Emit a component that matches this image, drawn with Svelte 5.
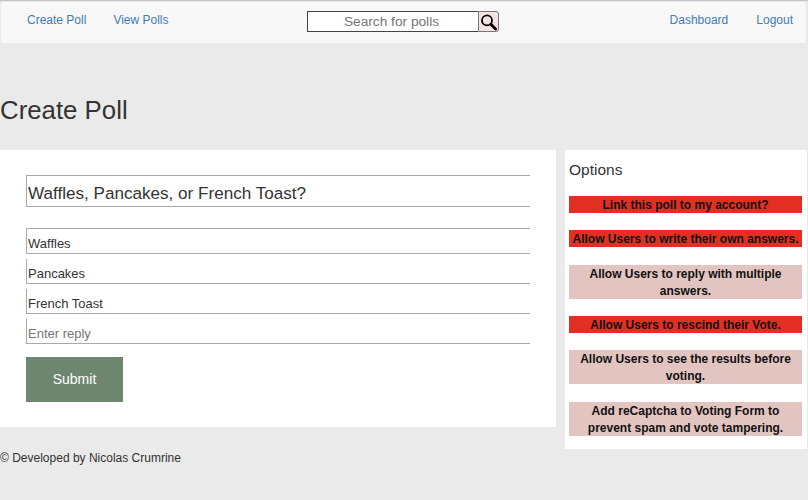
<script>
	let answers = ['Waffles', 'Pancakes', 'French Toast'];

	let options = [
		{ label: 'Link this poll to my account?', on: true },
		{ label: 'Allow Users to write their own answers.', on: true },
		{ label: 'Allow Users to reply with multiple answers.', on: false },
		{ label: 'Allow Users to rescind their Vote.', on: true },
		{ label: 'Allow Users to see the results before voting.', on: false },
		{ label: 'Add reCaptcha to Voting Form to prevent spam and vote tampering.', on: false }
	];
</script>

<div class="page">
	<nav class="navbar">
		<div class="nav-links">
			<a href="#create">Create Poll</a>
			<a href="#view">View Polls</a>
		</div>
		<form class="search">
			<input type="text" placeholder="Search for polls" />
			<button type="button" aria-label="Search">
				<svg width="18" height="18" viewBox="0 0 18 18">
					<circle cx="7" cy="7.4" r="5" fill="none" stroke="#000" stroke-width="1.8" />
					<path d="M10.8 11.2 L15.6 16" stroke="#000" stroke-width="2.8" stroke-linecap="round" />
				</svg>
			</button>
		</form>
		<div class="nav-links right">
			<a href="#dashboard">Dashboard</a>
			<a href="#logout">Logout</a>
		</div>
	</nav>

	<h1>Create Poll</h1>

	<div class="content">
		<div class="main">
			<form class="card">
				<input class="question" type="text" value="Waffles, Pancakes, or French Toast?" />
				<div class="answers">
					{#each answers as answer}
						<input class="answer" type="text" value={answer} />
					{/each}
					<input class="answer" type="text" placeholder="Enter reply" />
				</div>
				<button class="submit" type="button">Submit</button>
			</form>
			<footer>© Developed by Nicolas Crumrine</footer>
		</div>

		<aside class="sidebar">
			<h2>Options</h2>
			{#each options as option}
				<div class="option" class:on={option.on}><span>{option.label}</span></div>
			{/each}
		</aside>
	</div>
</div>

<style>
	:global(body) {
		background: #eaeaea;
		font-family: 'Liberation Sans', Arial, sans-serif;
		color: #333;
	}

	.page {
		height: 500px;
		overflow: hidden;
		border-top: 1px solid #c4c4c4;
	}

	.navbar {
		display: flex;
		align-items: flex-start;
		justify-content: space-between;
		height: 41px;
		margin: 1px 2px 0 1px;
		background: #f8f8f8;
		border-radius: 3px;
		box-sizing: border-box;
		position: relative;
	}

	.nav-links {
		display: flex;
		gap: 27px;
		padding: 11px 0 0 26px;
		font-size: 12px;
		line-height: 14px;
	}

	.nav-links.right {
		gap: 28px;
		padding: 11px 13px 0 0;
	}

	.nav-links a {
		color: #3f7cb4;
		text-decoration: none;
	}

	.search {
		display: flex;
		margin: 9px 0 0 0;
		position: absolute;
		left: 306px;
	}

	.search input {
		width: 171px;
		height: 21px;
		box-sizing: border-box;
		border: 1px solid #444;
		border-width: 1px 0 1px 1px;
		padding: 0 3px 0 0;
		text-align: center;
		font: 13.7px 'Liberation Sans', Arial, sans-serif;
		background: #fff;
	}

	.search input::placeholder {
		color: #757575;
		opacity: 1;
	}

	.search button {
		display: flex;
		align-items: center;
		justify-content: center;
		width: 21px;
		height: 21px;
		padding: 0;
		box-sizing: border-box;
		background: #f6e3e1;
		border: 1px solid #777;
		border-radius: 0 3px 3px 0;
	}

	h1 {
		margin: 0;
		padding-top: 52px;
		height: 55px;
		font-size: 25.8px;
		line-height: 30px;
		font-weight: 400;
		color: #333;
	}

	.content {
		display: flex;
		align-items: flex-start;
		gap: 9px;
	}

	.main {
		width: 556px;
	}

	.card {
		display: flex;
		flex-direction: column;
		align-items: flex-start;
		height: 277px;
		box-sizing: border-box;
		padding: 25px 26px 0;
		background: #fff;
	}

	input {
		outline: none;
	}

	.question {
		width: 504px;
		height: 32px;
		box-sizing: border-box;
		padding: 6px 1px 0;
		border: 1px solid #a9a9a9;
		border-right: 0;
		font: 17.1px 'Liberation Sans', Arial, sans-serif;
		color: #333;
	}

	.answers {
		display: flex;
		flex-direction: column;
		gap: 5px;
		margin-top: 21px;
	}

	.answer {
		width: 504px;
		height: 25px;
		box-sizing: border-box;
		padding: 5px 1px 0;
		border: 0;
		border-left: 1px solid #a9a9a9;
		border-bottom: 1px solid #a9a9a9;
		font: 13px 'Liberation Sans', Arial, sans-serif;
		color: #333;
	}

	.answer:first-child {
		height: 26px;
		border-top: 1px solid #a9a9a9;
	}

	.answer::placeholder {
		color: #757575;
		opacity: 1;
	}

	.submit {
		width: 97px;
		height: 45px;
		margin-top: 13px;
		border: 0;
		padding: 0 0 2px;
		background: #6f8770;
		color: #fff;
		font: 14px 'Liberation Sans', Arial, sans-serif;
	}

	footer {
		margin-top: 24px;
		font-size: 12px;
		line-height: 14px;
		color: #333;
	}

	.sidebar {
		width: 242px;
		height: 299px;
		box-sizing: border-box;
		padding: 11px 5px 0 4px;
		background: #fff;
	}

	h2 {
		margin: 0 0 18px;
		font-size: 15.5px;
		line-height: 17px;
		font-weight: 400;
		color: #333;
	}

	.option {
		margin-bottom: 17.14px;
		background: #e2c4c1;
		font-size: 12px;
		font-weight: 700;
		line-height: 17.14px;
		text-align: center;
		color: #111;
	}

	.option span {
		line-height: 1;
		vertical-align: -1px;
	}

	.option.on {
		background: #e32f22;
	}
</style>
